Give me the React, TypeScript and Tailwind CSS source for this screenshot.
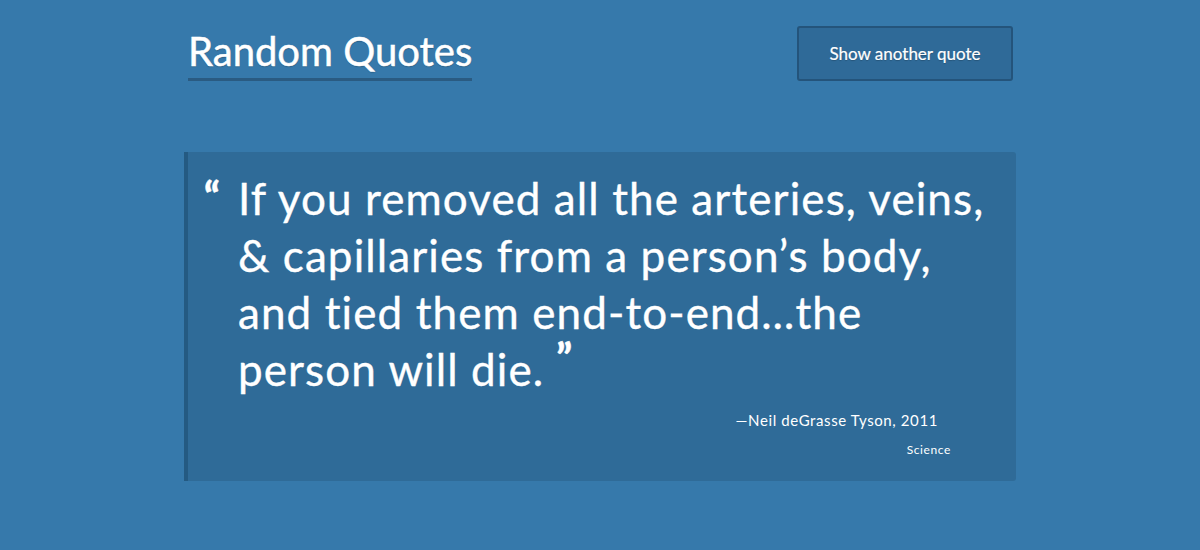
import { FC } from "react";

const font = { fontFamily: '"Lato", "Liberation Sans", sans-serif' };

export const Header: FC = () => {
  return (
    <header className="flex items-start justify-between pt-[26px]">
      <h1 className="ml-[4px] border-b-[3px] border-[#2a5b82] pb-[2px] text-[40px] leading-[50px] text-white [-webkit-text-stroke:0.5px_white] [text-shadow:0_1px_1px_rgba(0,0,0,0.25)]">
        Random Quotes
      </h1>
      <button className="mr-[3px] h-[55px] w-[216px] rounded-[3px] border-2 border-[#24547b] bg-[#2f6a98] text-[17px] text-white [-webkit-text-stroke:0.2px_white] [text-shadow:0_1px_1px_rgba(0,0,0,0.2)]">
        Show another quote
      </button>
    </header>
  );
};

export const QuoteCard: FC = () => {
  return (
    <figure className="mt-[71px] rounded-r-[3px] border-l-4 border-[#245a82] bg-[#2f6b98] pb-[22px] pl-[16px] pr-[20px] pt-[18px]">
      <blockquote className="relative pl-[34px] text-[44px] leading-[57px] tracking-[1.1px] text-white [-webkit-text-stroke:0.35px_white]">
        <span className="absolute left-0 top-[-2px] text-[40px] font-black leading-[57px]">“</span>
        If you removed all the arteries, veins, &amp; capillaries from a person’s body, and tied them
        end-to-end…the person will die.
        <span className="ml-[12px] align-[14px] text-[40px] font-black leading-[10px]">”</span>
      </blockquote>
      <figcaption className="mt-[10px] text-right text-white">
        <div className="pr-[58px] text-[15px] leading-[24px] tracking-[0.6px]">—Neil deGrasse Tyson, 2011</div>
        <div className="mt-[9px] pr-[45px] text-[12px] leading-[18px] tracking-[0.6px]">Science</div>
      </figcaption>
    </figure>
  );
};

export default function App() {
  return (
    <div className="h-[550px] w-full bg-[#3679ab]" style={font}>
      <main className="mx-auto w-[832px]">
        <Header />
        <QuoteCard />
      </main>
    </div>
  );
}
